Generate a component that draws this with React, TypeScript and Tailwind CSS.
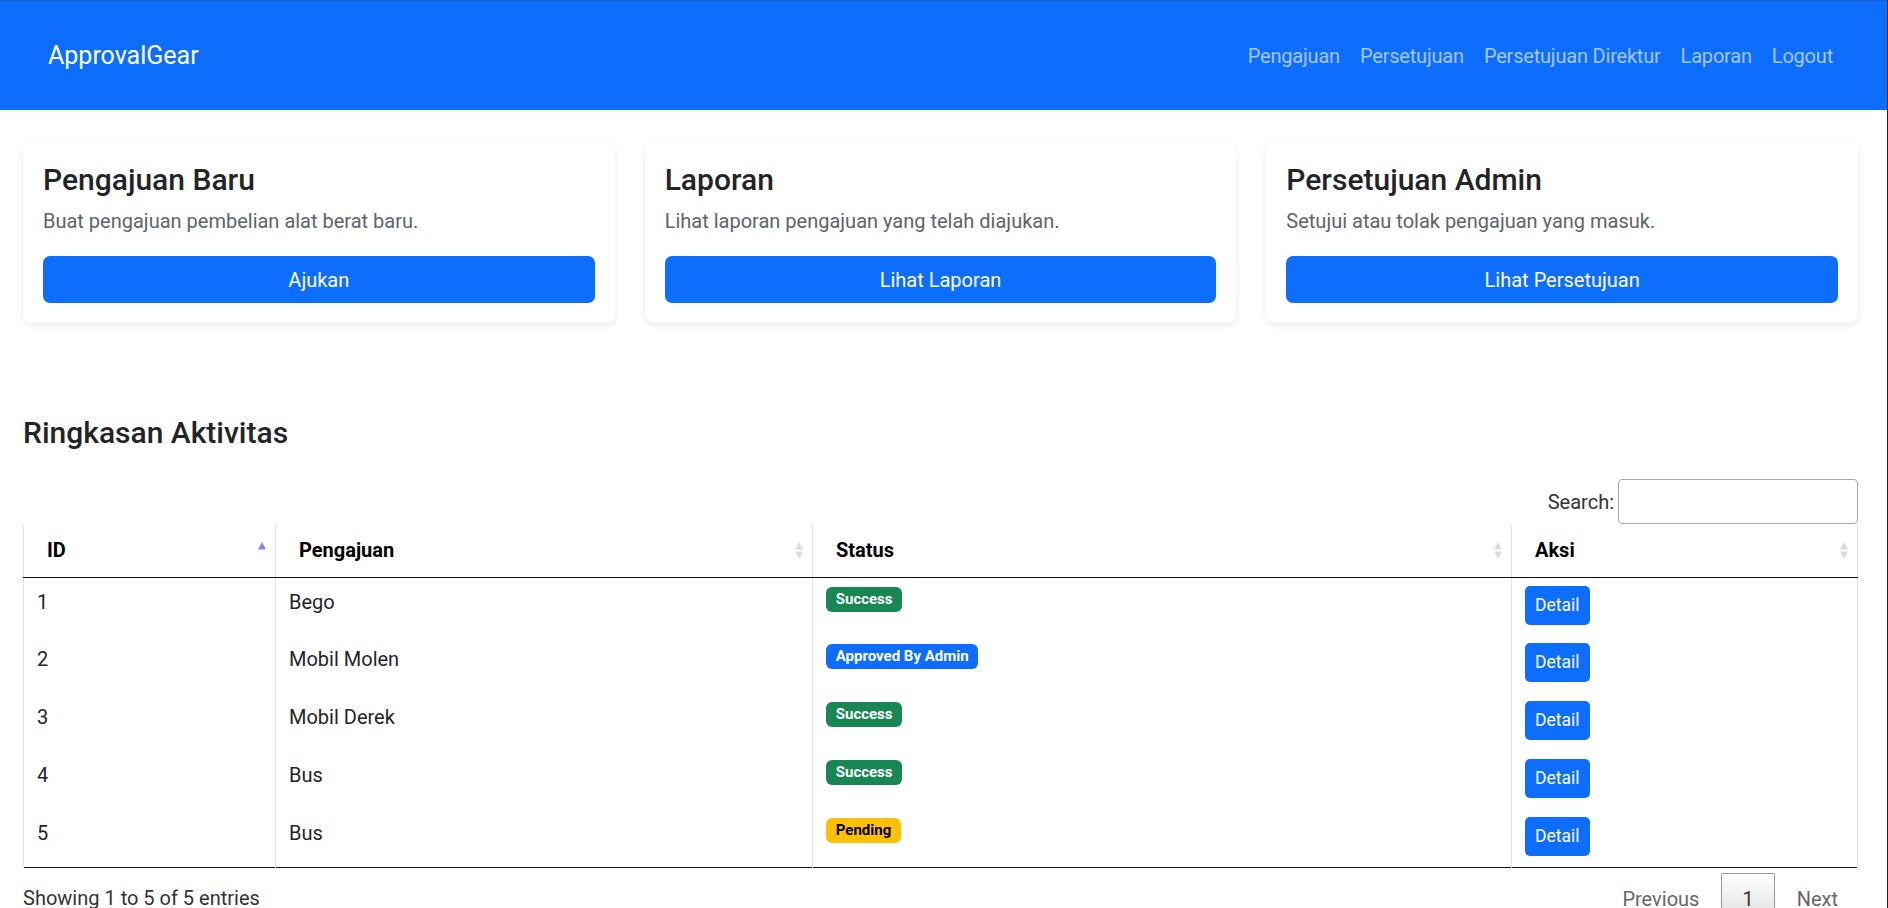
import React from "react";

type Row = { id: number; name: string; status: string };

const rows: Row[] = [
  { id: 1, name: "Bego", status: "Success" },
  { id: 2, name: "Mobil Molen", status: "Approved By Admin" },
  { id: 3, name: "Mobil Derek", status: "Success" },
  { id: 4, name: "Bus", status: "Success" },
  { id: 5, name: "Bus", status: "Pending" },
];

function badgeClass(s: string) {
  if (s === "Success") return "bg-[#198754] text-white";
  if (s === "Pending") return "bg-[#ffc107] text-black";
  return "bg-[#0d6efd] text-white";
}

function SortIcon({ asc }: { asc?: boolean }) {
  return (
    <svg width="10" height="19" viewBox="0 0 10 19" className="shrink-0">
      <polygon points="1,8.5 5,1 9,8.5" fill={asc ? "#8787d8" : "#dcdcdc"} />
      {!asc && <polygon points="1,10.5 5,18 9,10.5" fill="#dcdcdc" />}
    </svg>
  );
}

function Card({ title, text, button }: { title: string; text: string; button: string }) {
  return (
    <div className="rounded-[8px] bg-white shadow-[0_2px_6px_rgba(0,0,0,0.09)] px-[20px] pt-[20px] pb-[20px]">
      <h5 className="text-[30px] font-medium leading-[1.2] text-[#212529] mb-[8px]">{title}</h5>
      <p className="text-[20px] leading-[30px] text-[#5d646b] mb-[20px]">{text}</p>
      <button className="w-full h-[47px] rounded-[7px] bg-[#0d6efd] text-white text-[20px]">{button}</button>
    </div>
  );
}

export default function App() {
  const heads = ["ID", "Pengajuan", "Status", "Aksi"];
  const widths = ["w-[252px]", "w-[537px]", "w-[699px]", "w-[346px]"];
  return (
    <div className="w-full h-[908px] overflow-hidden bg-white border-r border-[#222] font-[family-name:Roboto,sans-serif] text-[#212529]">
      <nav className="h-[110px] bg-[#0d6efd] border-t border-[#1a5fcf] flex items-center justify-between pl-[48px] pr-[44px]">
        <span className="text-[25px] text-white">ApprovalGear</span>
        <div className="flex items-center text-[20px] text-[#a5c7fc] tracking-[-0.2px]">
          <a className="px-[10px]">Pengajuan</a>
          <a className="px-[10px]">Persetujuan</a>
          <a className="px-[10px]">Persetujuan Direktur</a>
          <a className="px-[10px]">Laporan</a>
          <a className="px-[10px]">Logout</a>
        </div>
      </nav>

      <div className="pl-[23px] pr-[29px]">
        <div className="grid grid-cols-3 gap-[30px] mt-[32px]">
          <Card title="Pengajuan Baru" text="Buat pengajuan pembelian alat berat baru." button="Ajukan" />
          <Card title="Laporan" text="Lihat laporan pengajuan yang telah diajukan." button="Lihat Laporan" />
          <Card title="Persetujuan Admin" text="Setujui atau tolak pengajuan yang masuk." button="Lihat Persetujuan" />
        </div>

        <h4 className="mt-[92px] text-[30px] font-medium leading-[1.2] text-[#212529]">Ringkasan Aktivitas</h4>

        <div className="mt-[28px] flex justify-end items-center text-[20px] text-[#333]">
          <span>Search:</span>
          <input className="ml-[4px] w-[240px] h-[45px] border border-[#aaa] rounded-[4px] bg-white" />
        </div>

        <table className="w-full table-fixed border-collapse">
          <thead>
            <tr>
              {heads.map((h, i) => (
                <th
                  key={h}
                  className={`${widths[i]} h-[53px] pl-[23px] pr-[8px] text-left text-[20px] font-bold text-black border-x border-[#dee2e6] border-b border-b-[#111]`}
                >
                  <div className="flex items-center justify-between">
                    <span>{h}</span>
                    <SortIcon asc={i === 0} />
                  </div>
                </th>
              ))}
            </tr>
          </thead>
          <tbody>
            {rows.map((r, idx) => (
              <tr key={r.id} className={idx === rows.length - 1 ? "border-b border-[#111]" : ""}>
                <td className="h-[58px] align-top pl-[13px] pt-[9px] text-[20px] leading-[30px] border-x border-[#dee2e6]">{r.id}</td>
                <td className="align-top pl-[13px] pt-[9px] text-[20px] leading-[30px] border-x border-[#dee2e6]">{r.name}</td>
                <td className="align-top pl-[13px] pt-[9px] text-[20px] leading-[30px] border-x border-[#dee2e6]">
                  <span className={`inline-block align-top text-[15px] font-bold leading-none px-[9.75px] py-[5px] rounded-[6px] ${badgeClass(r.status)}`}>
                    {r.status}
                  </span>
                </td>
                <td className="align-top pl-[13px] pt-[8px] border-x border-[#dee2e6]">
                  <button className="h-[39px] px-[10px] rounded-[5px] bg-[#0d6efd] text-white text-[17.5px]">Detail</button>
                </td>
              </tr>
            ))}
          </tbody>
        </table>

        <div className="flex justify-between items-start text-[20px]">
          <div className="pt-[15px] leading-[30px] text-[#333]">Showing 1 to 5 of 5 entries</div>
          <div className="pt-[5px] flex items-start leading-[30px]">
            <span className="px-[20px] py-[11px] text-[#666]">Previous</span>
            <span className="ml-[2px] px-[20px] py-[10px] border border-[#979797] rounded-[2px] bg-gradient-to-b from-white to-[#dcdcdc] text-[#333]">1</span>
            <span className="ml-[2px] px-[20px] py-[11px] text-[#666]">Next</span>
          </div>
        </div>
      </div>
    </div>
  );
}
